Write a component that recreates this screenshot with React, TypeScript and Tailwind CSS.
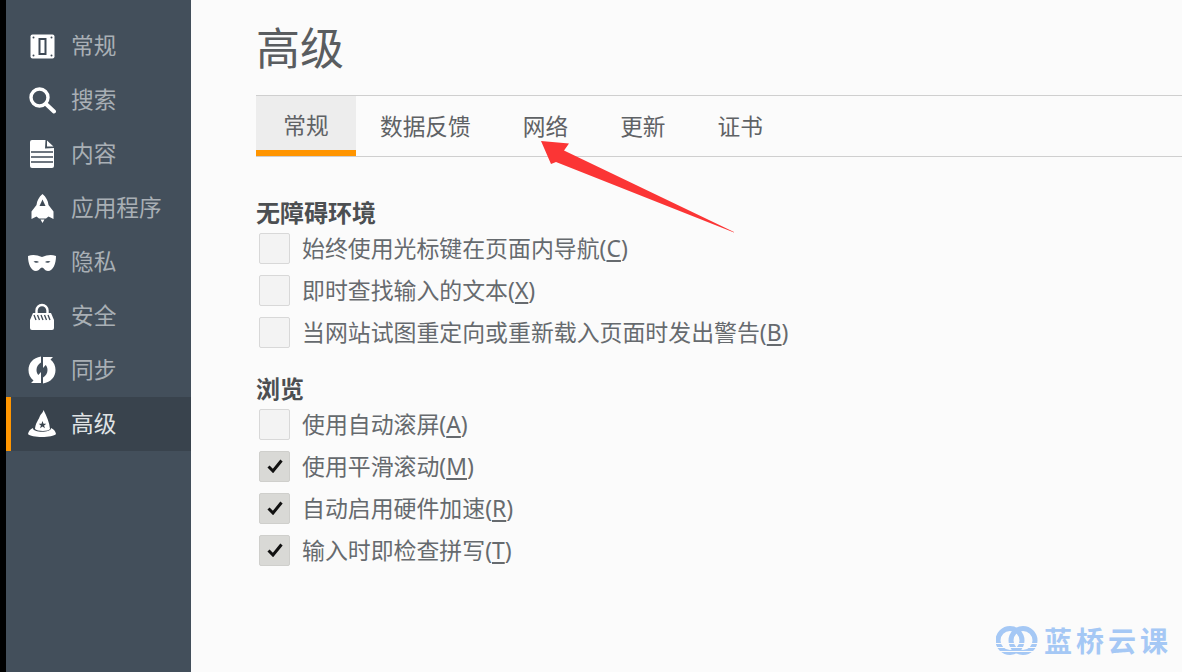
import type { ReactNode } from 'react';

const FONT = "font-['Noto_Sans','Noto_Sans_CJK_SC',sans-serif]";

const GeneralIcon = () => (
  <svg width="25" height="25" viewBox="0 0 25 25">
    <rect x="0.500" y="0.500" width="24" height="24" rx="2" fill="#fff" />
    <path fillRule="evenodd" d="M8.500 4h8v17h-8zM10.500 6v13h4V6z" fill="#3f4a56" />
    <circle cx="3.500" cy="3.500" r="1" fill="#3f4a56" />
    <circle cx="21.500" cy="3.500" r="1" fill="#3f4a56" />
    <circle cx="3.500" cy="21.500" r="1" fill="#3f4a56" />
    <circle cx="21.500" cy="21.500" r="1" fill="#3f4a56" />
  </svg>
);

const SearchIcon = () => (
  <svg width="28" height="28" viewBox="0 0 28 28" fill="none" stroke="#fff">
    <circle cx="11.500" cy="11.500" r="8.500" strokeWidth="3.400" />
    <path d="M18 18l8 7.500" strokeWidth="4" strokeLinecap="round" />
  </svg>
);

const ContentIcon = () => (
  <svg width="24" height="28" viewBox="0 0 24 28">
    <path d="M2 0h13.500l-.5 8.500 9-.5v18a2 2 0 0 1-2 2H2a2 2 0 0 1-2-2V2a2 2 0 0 1 2-2z" fill="#fff" />
    <path d="M17 0.500l6.500 6H17z" fill="#fff" />
    <path d="M1 12h22M1 17h22M1 22h22" stroke="#3f4a56" strokeWidth="1.700" />
  </svg>
);

const AppsIcon = () => (
  <svg width="23" height="29" viewBox="0 0 23 29">
    <path d="M11.500 0c3.500 3 5.500 6.500 6 11l5 6.500V25l-5-2.500-2.500 2H8l-2.500-2L.5 25v-7.500l5-6.500c.5-4.500 2.500-8 6-11z" fill="#fff" />
    <path d="M11.500 5.500L14.500 12h-6z" fill="#3f4a56" />
    <path d="M9.500 25.500h4L11.500 29z" fill="#fff" />
  </svg>
);

const PrivacyIcon = () => (
  <svg width="28" height="17" viewBox="0 0 28 17">
    <path
      fillRule="evenodd"
      d="M0 2c5-2 9-1 14 1 5-2 9-3 14-1 0 8-3 15-8 15-3 0-4.500-3.500-6-3.500S11 17 8 17C3 17 0 10 0 2zM5.500 7.500c1.500 1.500 4 1.800 5.500.6C9.500 6.800 7.500 6.500 5.500 7.500zm17 0c-1.500 1.500-4 1.800-5.500.6 1.500-1.300 3.500-1.600 5.500-.6z"
      fill="#fff"
    />
  </svg>
);

const SecurityIcon = () => (
  <svg width="24" height="27" viewBox="0 0 24 27">
    <path d="M6.500 11V7.500a5.500 5.500 0 0 1 11 0V11" fill="none" stroke="#fff" strokeWidth="2.400" />
    <path d="M3 10h18l3 7v8a2 2 0 0 1-2 2H2a2 2 0 0 1-2-2v-8z" fill="#fff" />
    <path d="M4 12l2 5M7.500 12l2 5M11 12l2 5M14.500 12l2 5M18 12l2 5" stroke="#3f4a56" strokeWidth="1.300" />
  </svg>
);

const SyncIcon = () => (
  <svg width="28" height="30" viewBox="0 0 28 30">
    <path d="M13 1.500v6C10 9 8.500 12 8.500 15c0 2 .7 3.600 1.800 5l2.700-3v11H3l2.500-2.500C2 23 .5 19 .5 15 .5 8 5 3 13 1.500z" fill="#fff" />
    <path d="M15 28.500v-6c3-1.500 4.500-4.500 4.500-7.500 0-2-.7-3.600-1.800-5L15 13V2h10l-2.500 2.500C26 7 27.500 11 27.500 15 27.500 22 23 27 15 28.500z" fill="#fff" />
  </svg>
);

const AdvancedIcon = () => (
  <svg width="28" height="28" viewBox="0 0 28 28">
    <path d="M15.500 0c-.5 3-3 4-4 7-1 3-4 6-4.500 12 2 2.500 14 2.500 15 0-.5-7-3.500-13-6.500-19z" fill="#fff" />
    <path d="M14.500 11l1 2.700 2.800.1-2.200 1.700.8 2.700-2.400-1.600-2.400 1.600.8-2.700-2.200-1.700 2.800-.1z" fill="#39434d" />
    <path d="M5 18c-2.500 1-4.500 3-5 6C3 28 25 28 28 24c-.5-3-2.500-5-5-6 .5 5-18.500 5-18 0z" fill="#fff" />
  </svg>
);

const NAV: { label: string; icon: ReactNode; active?: boolean }[] = [
  { label: '常规', icon: <GeneralIcon /> },
  { label: '搜索', icon: <SearchIcon /> },
  { label: '内容', icon: <ContentIcon /> },
  { label: '应用程序', icon: <AppsIcon /> },
  { label: '隐私', icon: <PrivacyIcon /> },
  { label: '安全', icon: <SecurityIcon /> },
  { label: '同步', icon: <SyncIcon /> },
  { label: '高级', icon: <AdvancedIcon />, active: true },
];

const TABS = [
  { label: '常规', active: true },
  { label: '数据反馈' },
  { label: '网络' },
  { label: '更新' },
  { label: '证书' },
];

const Checkbox = ({ checked, text, accel }: { checked?: boolean; text: string; accel: string }) => (
  <div className="flex h-[42px] items-center">
    <div
      className={`ml-[3px] flex h-[31px] w-[31px] items-center justify-center rounded-[2px] border ${
        checked ? 'border-[#cfcfcc] bg-[#d9d9d6]' : 'border-[#d8d8d8] bg-[#f3f3f3]'
      }`}
    >
      {checked && (
        <svg width="16" height="14" viewBox="0 0 16 14" fill="none">
          <path d="M1.500 7.500l4.500 4.500L14.500 1.500" stroke="#111" strokeWidth="3" />
        </svg>
      )}
    </div>
    <span className="ml-[12px] mt-[2px] text-[22.900px] leading-none text-[#666a6e]">
      {text}(<span className="underline underline-offset-[3px]">{accel}</span>)
    </span>
  </div>
);

export default function App() {
  return (
    <div className={`relative flex h-[672px] w-[1182px] overflow-hidden bg-[#fbfbfb] ${FONT}`}>
      <div className="w-[6px] bg-black" />

      {/* Sidebar */}
      <div className="w-[185px] bg-[#434f5b] pt-[19px]">
        {NAV.map((item) => (
          <div
            key={item.label}
            className={`flex h-[54px] items-center border-l-[5px] ${
              item.active ? 'border-[#ff9500] bg-[#39434d]' : 'border-transparent'
            }`}
          >
            <div className="flex w-[50px] items-center justify-center pl-[12px]">{item.icon}</div>
            <span className={`ml-[10px] text-[22.700px] leading-none ${item.active ? 'text-[#dfe2e4]' : 'text-[#a9afb5]'}`}>
              {item.label}
            </span>
          </div>
        ))}
      </div>

      {/* Main */}
      <div className="flex-1 pl-[65px]">
        <h1 className="h-[95px] pt-[18px] text-[44px] leading-[60px] text-[#5a5d60]">高级</h1>

        <div className="flex h-[62px] border-y border-[#cfcfcf]">
          {TABS.map((tab) => (
            <div
              key={tab.label}
              className={`flex items-center text-[22.700px] leading-none text-[#5f6265] ${
                tab.active
                  ? 'w-[100px] justify-center border-b-[6px] border-[#ff9500] bg-[#ededed] pt-[7px]'
                  : 'ml-[24px] pr-[28px] pt-[2px]'
              }`}
            >
              {tab.label}
            </div>
          ))}
        </div>

        <h2 className="mt-[42px] h-[28px] text-[24px] font-bold leading-[28px] text-[#4c4f52]">无障碍环境</h2>
        <Checkbox text="始终使用光标键在页面内导航" accel="C" />
        <Checkbox text="即时查找输入的文本" accel="X" />
        <Checkbox text="当网站试图重定向或重新载入页面时发出警告" accel="B" />

        <h2 className="mt-[22px] h-[28px] text-[24px] font-bold leading-[28px] text-[#4c4f52]">浏览</h2>
        <Checkbox text="使用自动滚屏" accel="A" />
        <Checkbox checked text="使用平滑滚动" accel="M" />
        <Checkbox checked text="自动启用硬件加速" accel="R" />
        <Checkbox checked text="输入时即检查拼写" accel="T" />
      </div>

      {/* Red annotation arrow */}
      <svg className="absolute left-[530px] top-[130px]" width="220" height="120" viewBox="530 130 220 120">
        <path d="M541 141L569 143.500L564 150.500L734 232L734 232.500L556 162L551 164z" fill="#fb3535" />
      </svg>

      {/* Watermark */}
      <div className="absolute left-[996px] top-[625px] flex items-center">
        <svg width="42" height="31" viewBox="0 0 42 31">
          <circle cx="14" cy="15.500" r="12" fill="none" stroke="#a5c8f5" strokeWidth="5" />
          <circle cx="27" cy="15.500" r="12" fill="none" stroke="#a5c8f5" strokeWidth="5" />
          <path d="M0 18.500h42M0 22.500h42M0 26.500h42" stroke="#fbfbfb" strokeWidth="1.200" />
        </svg>
        <span className="ml-[6px] text-[28px] font-bold leading-none tracking-[4px] text-[#a5c8f5]">蓝桥云课</span>
      </div>
    </div>
  );
}
